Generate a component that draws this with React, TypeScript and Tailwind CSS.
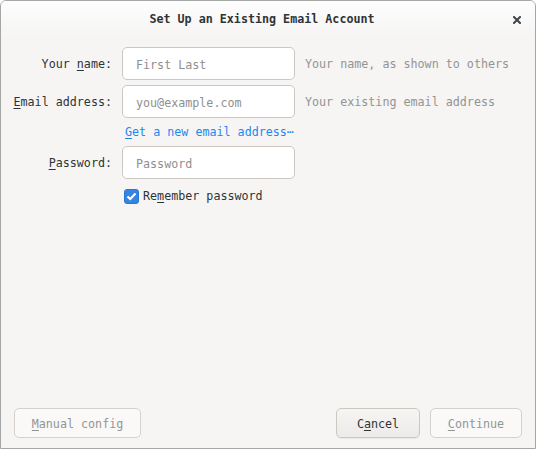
import { useState } from "react";

const mono = "font-['DejaVu_Sans_Mono',monospace] text-[11.7px]";

function U({ children }: { children: string }) {
  return <span className="underline underline-offset-[2px]">{children}</span>;
}

interface FieldProps {
  label: React.ReactNode;
  placeholder: string;
  hint?: string;
  type?: string;
}

function Field({ label, placeholder, hint, type = "text" }: FieldProps) {
  return (
    <div className="flex items-center h-[33px]">
      <label className="w-[111px] text-right text-[#2e3436] pt-[3px]">{label}</label>
      <input
        type={type}
        placeholder={placeholder}
        className="ml-[10px] w-[173px] h-[33px] rounded-[5px] border border-[#cdc7c2] bg-white pl-[13px] pt-[2px] text-[#2e3436] placeholder:text-[#8f8f8f] outline-none"
      />
      {hint && <span className="ml-[10px] text-[#919494] pt-[3px]">{hint}</span>}
    </div>
  );
}

export default function App() {
  const [remember, setRemember] = useState(true);

  return (
    <div
      className={`${mono} w-[536px] h-[449px] flex flex-col border border-[#a6a6a6] rounded-t-[6px] bg-[#f6f5f4] overflow-hidden`}
    >
      <div className="h-[36px] flex items-center shrink-0 bg-gradient-to-b from-[#fdfdfd] to-[#f6f5f4]">
        <div className="flex-1 text-center font-bold text-[#2e3436] pl-[23px] pt-[2px]">
          Set Up an Existing Email Account
        </div>
        <button className="w-[34px] h-full flex items-center justify-center mr-[1px] pt-[1px]">
          <svg width="8" height="8" viewBox="0 0 8 8">
            <path d="M1 1 L7 7 M7 1 L1 7" stroke="#3d4649" strokeWidth="2" strokeLinecap="square" />
          </svg>
        </button>
      </div>

      <div className="flex-1 flex flex-col pt-[10px]">
        <Field
          label={
            <>
              Your <U>n</U>ame:
            </>
          }
          placeholder="First Last"
          hint="Your name, as shown to others"
        />
        <div className="mt-[5px]">
          <Field
            label={
              <>
                <U>E</U>mail address:
              </>
            }
            placeholder="you@example.com"
            hint="Your existing email address"
          />
        </div>
        <div className="h-[28px] flex items-center pl-[124px] pt-[1px]">
          <a className="text-[#1f87f0] cursor-pointer">
            <U>G</U>et a new email address⋯
          </a>
        </div>
        <Field
          label={
            <>
              <U>P</U>assword:
            </>
          }
          placeholder="Password"
          type="password"
        />
        <label className="mt-[10px] ml-[123px] h-[15px] flex items-center gap-[4px] text-[#2e3436] cursor-pointer">
          <span
            onClick={() => setRemember(!remember)}
            className={`w-[15px] h-[15px] rounded-[3px] flex items-center justify-center ${
              remember ? "bg-[#3584e4] border border-[#2a76d4]" : "bg-white border border-[#cdc7c2]"
            }`}
          >
            {remember && (
              <svg width="11" height="9" viewBox="0 0 11 9">
                <path d="M1.5 4.5 L4.2 7 L9.5 1.5" stroke="white" strokeWidth="2.2" fill="none" />
              </svg>
            )}
          </span>
          <span>
            Re<U>m</U>ember password
          </span>
        </label>

        <div className="mt-auto flex items-center px-[13px] pb-[10px]">
          <button
            disabled
            className="w-[127px] h-[30px] pt-[3px] rounded-[5px] border border-[#d6d1cd] bg-[#faf9f8] text-[#929595]"
          >
            <U>M</U>anual config
          </button>
          <div className="ml-auto flex gap-[10px]">
            <button className="w-[84px] h-[30px] pt-[3px] rounded-[5px] border border-[#cdc7c2] bg-gradient-to-b from-[#f6f5f4] to-[#edebe9] text-[#2e3436] shadow-[0_1px_0_rgba(0,0,0,0.05)]">
              C<U>a</U>ncel
            </button>
            <button
              disabled
              className="w-[92px] h-[30px] pt-[3px] rounded-[5px] border border-[#d6d1cd] bg-[#faf9f8] text-[#929595]"
            >
              <U>C</U>ontinue
            </button>
          </div>
        </div>
      </div>
    </div>
  );
}
